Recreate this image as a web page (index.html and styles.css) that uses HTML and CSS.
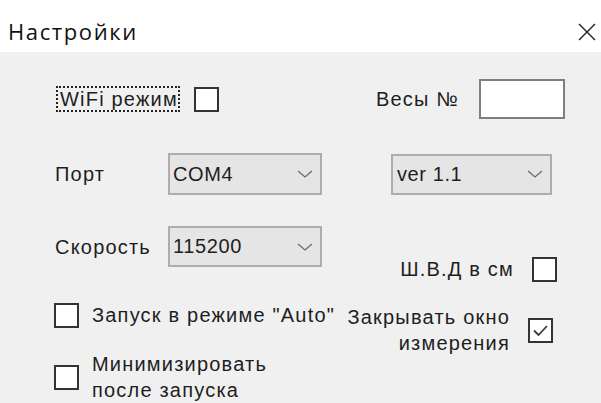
FILE: index.html
```html
<!DOCTYPE html>
<html lang="ru">
<head>
<meta charset="utf-8">
<title>Настройки</title>
<link rel="stylesheet" href="styles.css">
</head>
<body>
<div class="window">
  <header class="titlebar">
    <span class="title">Настройки</span>
    <svg class="close" width="18" height="18" viewBox="0 0 18 18" aria-hidden="true">
      <path d="M1 1 L17 17 M17 1 L1 17" stroke="#1e1e1e" stroke-width="1.4" fill="none"/>
    </svg>
  </header>

  <main class="client">
    <div class="row row-top">
      <span class="focus-label">WiFi режим</span>
      <span class="check"></span>
      <div class="scale">
        <span class="label">Весы №</span>
        <span class="textbox"></span>
      </div>
    </div>

    <div class="row row-port">
      <span class="label field-label">Порт</span>
      <div class="combo combo-port">
        <span class="combo-text">COM4</span>
        <svg class="chevron" width="16" height="8" viewBox="0 0 16 8"><path d="M1 1 L8 7 L15 1" stroke="#6b6b6b" stroke-width="1.3" fill="none"/></svg>
      </div>
      <div class="combo combo-ver">
        <span class="combo-text">ver 1.1</span>
        <svg class="chevron" width="16" height="8" viewBox="0 0 16 8"><path d="M1 1 L8 7 L15 1" stroke="#6b6b6b" stroke-width="1.3" fill="none"/></svg>
      </div>
    </div>

    <div class="lower">
      <div class="col-left">
        <div class="row row-speed">
          <span class="label field-label">Скорость</span>
          <div class="combo combo-speed">
            <span class="combo-text">115200</span>
            <svg class="chevron" width="16" height="8" viewBox="0 0 16 8"><path d="M1 1 L8 7 L15 1" stroke="#6b6b6b" stroke-width="1.3" fill="none"/></svg>
          </div>
        </div>
        <div class="option option-auto">
          <span class="check"></span>
          <span class="label">Запуск в режиме "Auto"</span>
        </div>
        <div class="option option-min">
          <span class="check"></span>
          <span class="label multiline">Минимизировать<br>после запуска</span>
        </div>
      </div>

      <div class="col-right">
        <div class="option option-dims">
          <span class="label">Ш.В.Д в см</span>
          <span class="check"></span>
        </div>
        <div class="option option-close">
          <span class="label multiline right">Закрывать окно<br>измерения</span>
          <span class="check checked">
            <svg width="21" height="21" viewBox="0 0 21 21"><path d="M4 10.5 L8.5 15 L17 6" stroke="#3a3a3a" stroke-width="1.8" fill="none"/></svg>
          </span>
        </div>
      </div>
    </div>
  </main>
</div>
</body>
</html>
```

FILE: styles.css
```css
* {
  box-sizing: border-box;
}

html, body {
  margin: 0;
  padding: 0;
}

body {
  width: 601px;
  height: 403px;
  overflow: hidden;
  font-family: "Liberation Sans", Arial, sans-serif;
  color: #1e1e1e;
}

.window {
  width: 601px;
  height: 403px;
  display: flex;
  flex-direction: column;
}

/* title bar */
.titlebar {
  height: 52px;
  flex-shrink: 0;
  background: #ffffff;
  display: flex;
  justify-content: space-between;
  align-items: flex-start;
  padding: 0 5px 0 8px;
}

.title {
  font-family: "Open Sans", "Noto Sans", sans-serif;
  font-size: 22px;
  letter-spacing: 1.6px;
  line-height: 28px;
  margin-top: 17px;
  color: #111;
}

.close {
  margin-top: 23px;
}

/* client area */
.client {
  flex: 1;
  background: #f0f0f0;
  padding: 27px 36px 0 54px;
  font-size: 20px;
  letter-spacing: 1.2px;
}

.row {
  display: flex;
  align-items: center;
}

.label {
  white-space: nowrap;
  line-height: 26px;
}

.field-label {
  width: 114px;
  padding-left: 1px;
  flex-shrink: 0;
}

.row-top {
  height: 40px;
}

.focus-label {
  margin-left: 2px;
  height: 26px;
  line-height: 22px;
  padding: 0 0 0 2px;
  border: 2px dotted #222;
  white-space: nowrap;
}

.row-top .check {
  margin-left: 14px;
}

.scale {
  margin-left: auto;
  display: flex;
  align-items: center;
  gap: 20px;
}

.textbox {
  width: 86px;
  height: 40px;
  background: #fff;
  border: 2px solid #7f7f7f;
}

/* checkboxes */
.check {
  width: 25px;
  height: 25px;
  flex-shrink: 0;
  background: #fff;
  border: 2px solid #333;
  display: flex;
  align-items: center;
  justify-content: center;
}

/* drop-down lists */
.combo {
  height: 42px;
  background: #e5e5e5;
  border: 2px solid #adadad;
  display: flex;
  align-items: center;
  justify-content: space-between;
  padding: 0 7px 0 3px;
  flex-shrink: 0;
  letter-spacing: 0.6px;
}

.combo-text {
  white-space: nowrap;
}

.combo-port,
.combo-speed {
  width: 154px;
}

.combo-speed {
  height: 41px;
}

.combo-ver {
  width: 161px;
  height: 41px;
  margin-left: auto;
  margin-right: 13px;
  padding-left: 4px;
}

.row-port {
  margin-top: 34px;
}

/* lower part: two columns */
.lower {
  margin-top: 31px;
  display: flex;
}

.col-left {
  display: flex;
  flex-direction: column;
}

.col-right {
  margin-left: auto;
  display: flex;
  flex-direction: column;
  align-items: flex-end;
  padding-top: 30px;
}

.option {
  display: flex;
  align-items: center;
}

.option-auto {
  margin-top: 35px;
  gap: 13px;
}

.option-min {
  margin-top: 23px;
  gap: 13px;
}

.option-dims {
  gap: 18px;
  margin-right: 8px;
}

.option-close {
  margin-top: 22px;
  gap: 18px;
  margin-right: 12px;
}

.multiline {
  line-height: 26px;
}

.right {
  text-align: right;
}
```
